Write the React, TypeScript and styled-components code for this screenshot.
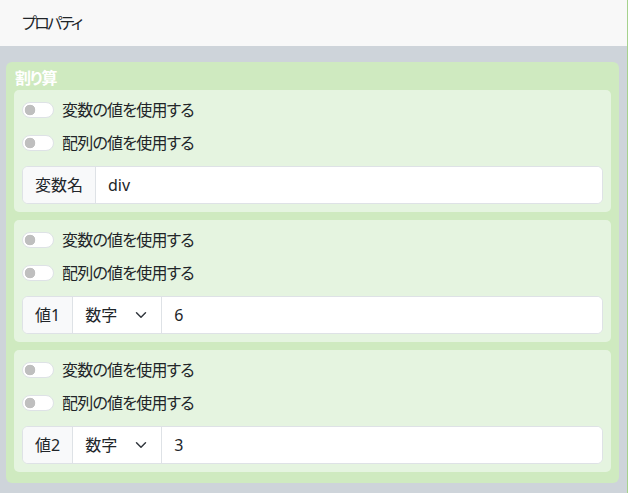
import React from "react";
import styled, { createGlobalStyle } from "styled-components";

const GlobalStyle = createGlobalStyle`
  html, body {
    margin: 0;
    padding: 0;
  }
  body {
    font-family: "Noto Sans", "Noto Sans CJK JP", sans-serif;
    font-size: 16px;
    line-height: 1.5;
    color: #212529;
    font-feature-settings: "palt";
  }
  * { box-sizing: border-box; }
`;

const Page = styled.div`
  display: flex;
  flex-direction: column;
  min-height: 100vh;
  background: #ced4da;
  border-right: 1px solid #a6d28d;
`;

const Header = styled.div`
  height: 46px;
  flex: 0 0 46px;
  display: flex;
  align-items: center;
  padding: 0 22px;
  background: #f8f8f8;
  font-size: 16px;
  letter-spacing: -2.5px;
  color: #212529;
`;

const Body = styled.div`
  padding: 16px 8px 10px 6px;
`;

const BlockCard = styled.section`
  background: #cfeac0;
  border-radius: 6px;
  padding: 4px 8px 11px;
`;

const BlockTitle = styled.div`
  color: #ffffff;
  font-weight: 700;
  font-size: 16px;
  line-height: 24px;
  letter-spacing: -1px;
  padding-left: 1px;
`;

const ArgList = styled.div`
  display: flex;
  flex-direction: column;
  gap: 8px;
`;

const ArgCard = styled.div`
  background: #e5f4e0;
  border-radius: 5px;
  padding: 8px;
  display: flex;
  flex-direction: column;
  gap: 9px;
`;

const SwitchRow = styled.label`
  display: flex;
  align-items: center;
  gap: 8px;
  height: 24px;
  font-size: 16px;
  line-height: 24px;
  letter-spacing: -0.8px;
  color: #212529;
  cursor: pointer;
`;

const SwitchInput = styled.input.attrs({ type: "checkbox" })`
  appearance: none;
  -webkit-appearance: none;
  margin: 0;
  width: 32px;
  height: 16px;
  border: 1px solid #dee2e6;
  border-radius: 16px;
  background-color: #ffffff;
  background-image: radial-gradient(circle at 7px 50%, #bfbfbf 5px, rgba(191,191,191,0) 5.6px);
  flex: 0 0 auto;
  cursor: pointer;
`;

const InputGroup = styled.div`
  display: flex;
  height: 38px;
  margin-top: 2px;
  border: 1px solid #dee2e6;
  border-radius: 6px;
  overflow: hidden;
  background: #ffffff;
`;

const Addon = styled.span`
  display: flex;
  align-items: center;
  padding: 0 12px;
  background: #f8f9fa;
  font-size: 16px;
  color: #212529;
  white-space: nowrap;
`;

const chevron =
  "data:image/svg+xml," +
  encodeURIComponent(
    "<svg xmlns='http://www.w3.org/2000/svg' viewBox='0 0 16 16'><path fill='none' stroke='#343a40' stroke-linecap='round' stroke-linejoin='round' stroke-width='2' d='m2 5 6 6 6-6'/></svg>"
  );

const TypeSelect = styled.select`
  appearance: none;
  -webkit-appearance: none;
  width: 89px;
  flex: 0 0 89px;
  border: none;
  border-left: 1px solid #dee2e6;
  padding: 0 36px 0 12px;
  margin: 0;
  font-family: inherit;
  font-size: 16px;
  color: #212529;
  background-color: #ffffff;
  background-image: url("${chevron}");
  background-repeat: no-repeat;
  background-position: right 12px center;
  background-size: 16px 12px;
  outline: none;
`;

const TextInput = styled.input`
  flex: 1 1 auto;
  min-width: 0;
  border: none;
  border-left: 1px solid #dee2e6;
  padding: 0 12px;
  margin: 0;
  font-family: inherit;
  font-size: 16px;
  color: #212529;
  background: #ffffff;
  outline: none;
`;

type Arg = {
  label: string;
  value: string;
  withType?: boolean;
};

const args: Arg[] = [
  { label: "変数名", value: "div" },
  { label: "値1", value: "6", withType: true },
  { label: "値2", value: "3", withType: true },
];

function Toggle({ text }: { text: string }) {
  return (
    <SwitchRow>
      <SwitchInput />
      <span>{text}</span>
    </SwitchRow>
  );
}

export default function App() {
  return (
    <>
      <GlobalStyle />
      <Page>
        <Header>プロパティ</Header>
        <Body>
          <BlockCard>
            <BlockTitle>割り算</BlockTitle>
            <ArgList>
              {args.map((a) => (
                <ArgCard key={a.label}>
                  <Toggle text="変数の値を使用する" />
                  <Toggle text="配列の値を使用する" />
                  <InputGroup>
                    <Addon>{a.label}</Addon>
                    {a.withType && (
                      <TypeSelect defaultValue="num">
                        <option value="num">数字</option>
                        <option value="str">文字</option>
                      </TypeSelect>
                    )}
                    <TextInput defaultValue={a.value} />
                  </InputGroup>
                </ArgCard>
              ))}
            </ArgList>
          </BlockCard>
        </Body>
      </Page>
    </>
  );
}
